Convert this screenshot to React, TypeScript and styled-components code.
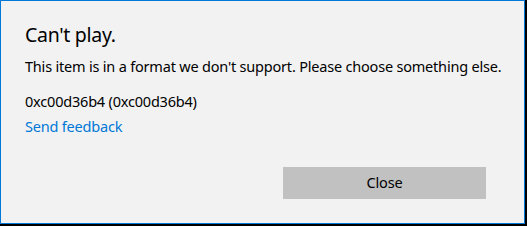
import React from "react";
import styled, { createGlobalStyle } from "styled-components";

const Global = createGlobalStyle`
  html, body { margin: 0; padding: 0; background: #000; }
  body { width: 527px; height: 226px; overflow: hidden; }
  #root { width: 527px; height: 226px; }
`;

const Dialog = styled.div`
  box-sizing: border-box;
  width: 525px;
  height: 224px;
  border: 1px solid #0078d7;
  background: #f2f2f2;
  display: flex;
  flex-direction: column;
  padding: 20px 38px 24px 24px;
  font-family: "Noto Sans", "Open Sans", sans-serif;
  color: #000;
`;

const Title = styled.h1`
  margin: 0;
  font-size: 19.5px;
  letter-spacing: -0.3px;
  line-height: 28px;
  font-weight: 400;
`;

const Message = styled.p<{ $gap: number }>`
  margin: ${(p) => p.$gap}px 0 0;
  font-size: 14.5px;
  letter-spacing: -0.2px;
  line-height: 20px;
  white-space: nowrap;
`;

const Link = styled.a`
  display: block;
  margin-top: 5px;
  font-size: 14.5px;
  letter-spacing: -0.2px;
  line-height: 20px;
  color: #0078d7;
  text-decoration: none;
  cursor: pointer;
`;

const Footer = styled.div`
  margin-top: auto;
  display: flex;
  justify-content: flex-end;
`;

const Button = styled.button`
  width: 203px;
  height: 32px;
  border: none;
  background: #c1c1c1;
  font-family: inherit;
  font-size: 14.5px;
  letter-spacing: -0.2px;
  line-height: 30px;
  color: #000;
  padding: 0 0 2px;
`;

export default function App() {
  return (
    <>
      <Global />
      <Dialog>
        <Title>Can't play.</Title>
        <Message $gap={7}>
          This item is in a format we don't support. Please choose something else.
        </Message>
        <Message $gap={15}>0xc00d36b4 (0xc00d36b4)</Message>
        <Link>Send feedback</Link>
        <Footer>
          <Button>Close</Button>
        </Footer>
      </Dialog>
    </>
  );
}
